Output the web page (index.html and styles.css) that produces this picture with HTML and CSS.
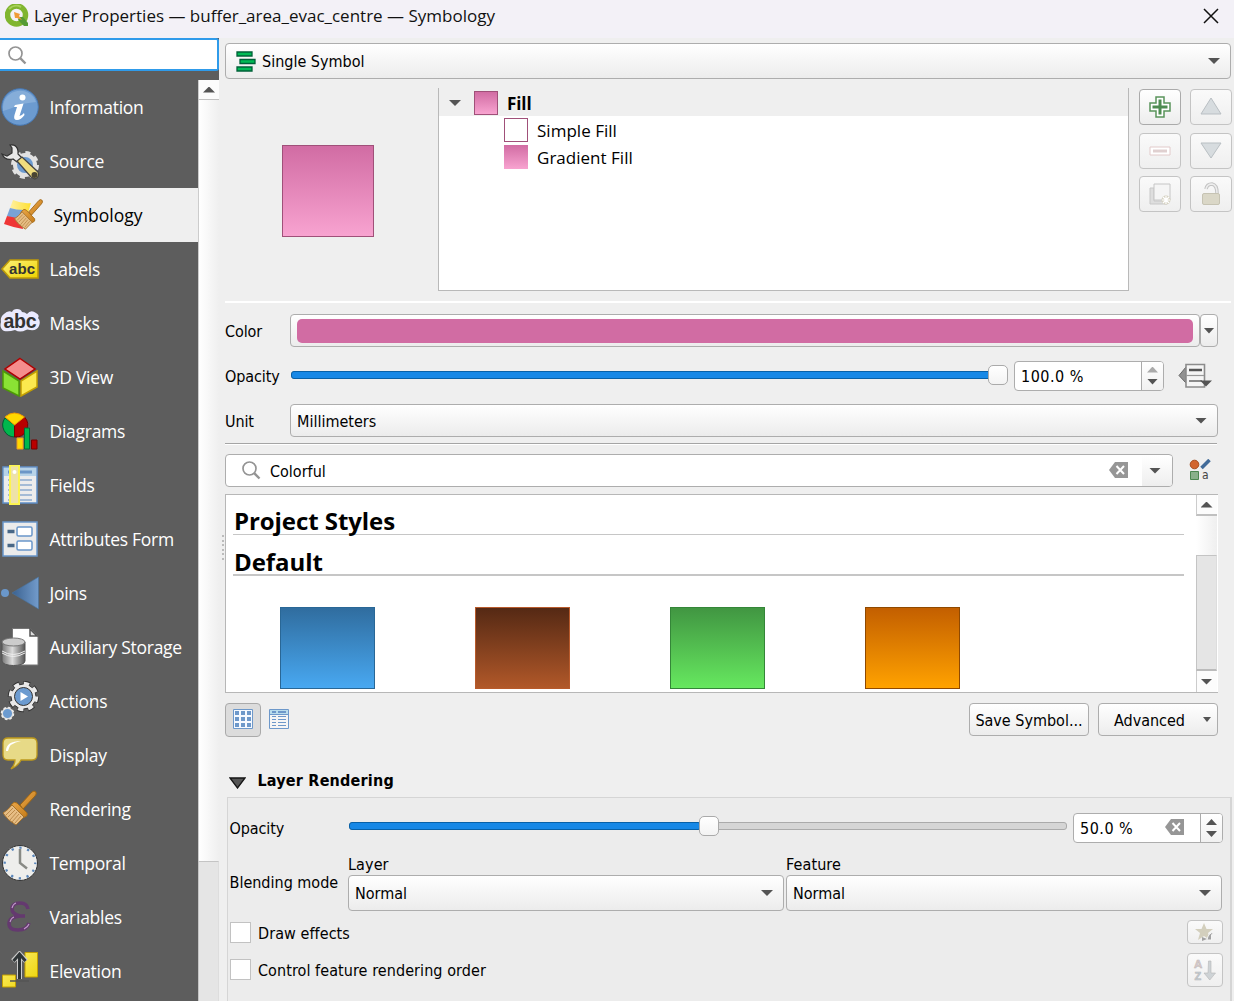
FILE: index.html
```html
<!DOCTYPE html>
<html lang="en">
<head>
<meta charset="utf-8">
<title>Layer Properties</title>
<link rel="stylesheet" href="styles.css">
</head>
<body>
<svg class="defs" width="0" height="0" aria-hidden="true">
  <defs>
    <linearGradient id="yel" x1="0" y1="0" x2="1" y2="1"><stop offset="0" stop-color="#fff27a"/><stop offset="1" stop-color="#ecd200"/></linearGradient>
    <linearGradient id="blu"><stop offset="0" stop-color="#3a6190"/><stop offset="1" stop-color="#729bcb"/></linearGradient>
    <linearGradient id="met"><stop offset="0" stop-color="#777"/><stop offset=".45" stop-color="#ddd"/><stop offset="1" stop-color="#555"/></linearGradient>
    <linearGradient id="wood" x1="0" y1="0" x2="1" y2="1"><stop offset="0" stop-color="#eca94c"/><stop offset="1" stop-color="#c37a17"/></linearGradient>
    <linearGradient id="flagy" x1="0" x2="1"><stop offset="0" stop-color="#fff0a0"/><stop offset="1" stop-color="#ffe030"/></linearGradient>
    <g id="brush">
      <path d="M20 17 L32 4 Q34 2 36 4 Q37 6 35 8 L23 21z" fill="url(#wood)" stroke="#9c6414"/>
      <path d="M12 16 Q14 13 17 15 L27 25 Q28 28 25 29 L22 30 L10 19z" fill="url(#wood)" stroke="#a66c18"/>
      <path d="M12 17 L24 29 L16 37 Q7 32 3 25 Q8 22 12 17z" fill="#e6bd84" stroke="#a3712d"/>
      <path d="M13 20L6 27M15 22L8 29M17 24L10 32M19 26L12 34M21 28L15 35" stroke="#b78545" stroke-width=".9"/>
    </g>
    <g id="lens"><circle cx="7.500" cy="7.500" r="6.500" fill="none" stroke="#949494" stroke-width="1.700"/><path d="M12.200 12.200L17.500 17.500" stroke="#949494" stroke-width="2.400"/></g>
    <g id="clear"><path d="M0 8L6 0H19V16H6z" fill="#969696"/><path d="M7.500 4L15 12M15 4L7.500 12" stroke="#fff" stroke-width="2"/></g>
  </defs>
</svg>
<header class="titlebar">
  <svg class="logo" width="25" height="25" viewBox="0 0 25 25"><circle cx="11.500" cy="11" r="9" fill="none" stroke="#80b52f" stroke-width="5.500"/><path d="M4 5A10 10 0 0 1 16 3" fill="none" stroke="#a7d15a" stroke-width="2"/><path d="M14 13H18L23 19V22H19L13 16z" fill="#559b36"/><path d="M9 8L15 10L14 12L17 16L12 14L10 14z" fill="#f09a38"/></svg>
  <h1>Layer Properties — buffer_area_evac_centre — Symbology</h1>
  <svg class="close" width="16" height="16" viewBox="0 0 16 16"><path d="M1 1L15 15M15 1L1 15" stroke="#111" stroke-width="1.500"/></svg>
</header>
<div class="window">
  <aside class="sidebar">
    <div class="side-search"><svg width="19" height="19"><use href="#lens"/></svg></div>
    <div class="side-body">
      <nav class="nav">
        <a class="item"><svg viewBox="0 0 40 40"><circle cx="20" cy="20" r="18.300" fill="#6c9bd0" stroke="#4677b2"/><path d="M3 20A17 17 0 0 1 36 15Q24 16 17 19T3 24z" fill="#9bbce0" opacity=".55"/><circle cx="22.500" cy="10.500" r="3" fill="#fff"/><path d="M15 18L23.500 16.500L19.500 29Q22 28.500 24 26L24.500 28Q21 33 17 33Q13 33 14.500 28L17 20L14 20z" fill="#fff"/></svg><span>Information</span></a>
        <a class="item"><svg viewBox="0 0 40 40"><circle cx="25" cy="24" r="10" fill="#6c9bd0" stroke="#e2e2e2" stroke-width="4"/><circle cx="25" cy="24" r="12.500" fill="none" stroke="#e2e2e2" stroke-width="3" stroke-dasharray="5 4.817"/><path d="M10 4Q17 3 18 10L18 13L22 17L17 21L13 18Q5 20 2 13L7 15L12 12L12 7z" fill="#e8e8e8" stroke="#333" stroke-width="1.200"/><path d="M17 20L22 16L38 31Q40 36 35 38L31 36z" fill="#f0dd7e" stroke="#444" stroke-width="1.300"/><circle cx="34.500" cy="34" r="3" fill="#4a4532"/></svg><span>Source</span></a>
        <a class="item active"><svg viewBox="0 0 40 40"><path d="M9 5Q18 9 27 8L24 18L6 13z" fill="url(#flagy)"/><path d="M6 13Q12 15 20 15L16 26L3 21z" fill="#78a2d6"/><path d="M3 21L18 24L19 34Q8 32 0 29z" fill="#ef3535"/><use href="#brush" transform="translate(8 2) scale(.84 .87)"/></svg><span>Symbology</span></a>
        <a class="item"><svg viewBox="0 0 40 40"><path d="M2 20L10 11H38V29H10z" fill="url(#yel)" stroke="#be9b08" stroke-width="1.600"/><text x="9" y="24.500" class="abc" font-size="15" textLength="26">abc</text></svg><span>Labels</span></a>
        <a class="item"><svg viewBox="0 0 40 40"><path d="M4 11Q8 7 12 9Q13 6 17 6Q21 6 22 9Q25 9 27 11Q31 6 36 10Q40 12 38 15Q41 18 39 23Q37 28 30 27Q27 26 26 27Q20 30 15 27Q9 29 4 28Q-1 25 1 19Q0 14 4 11z" fill="#eaeaff"/><text x="3.500" y="24.500" class="abc" font-size="19.500" textLength="33">abc</text></svg><span>Masks</span></a>
        <a class="item"><svg viewBox="0 0 40 40"><path d="M20 1.500L35 12L20 22L5 12z" fill="#f58d8d" stroke="#b00000" stroke-width="1.500"/><path d="M3 14L19 24V39L3 31z" fill="#8ae234" stroke="#4e9a06" stroke-width="1.500"/><path d="M37 14L21 24V39L37 30z" fill="#fce94f" stroke="#c4a000" stroke-width="1.500"/></svg><span>3D View</span></a>
        <a class="item"><svg viewBox="0 0 40 40"><path d="M14.500 14V26A12 12 0 0 1 5 7z" fill="#00b74d" stroke="#005c31"/><path d="M14.500 14L24.500 6A12 12 0 0 1 14.500 26z" fill="#b90000" stroke="#760000"/><path d="M14.500 14L5 6Q14 -2 24.500 6z" fill="#ffd900" stroke="#ef9a00"/><path d="M17 27H23V38H17z" fill="#ffd900" stroke="#f09b22"/><path d="M24.500 17H29.500V38H24.500z" fill="#00b74d" stroke="#006837"/><path d="M31.500 29H37V38H31.500z" fill="#b90000" stroke="#760000"/></svg><span>Diagrams</span></a>
        <a class="item"><svg viewBox="0 0 40 40"><path d="M3 2H37V38H3z" fill="#ececec" stroke="#5f8fc8" stroke-width="1.500"/><path d="M4 3H36V11H4z" fill="#b7d3e8"/><path d="M8 7H32" stroke="#6b96c7" stroke-width="3"/><path d="M8 15H32M8 20H32M8 25H32M8 30H32M8 35H32" stroke="#5d8ac0" stroke-width="1.200"/><path d="M10 .5H19V39H10z" fill="#eee2a8" stroke="#fcf450" stroke-width="2"/><circle cx="14.500" cy="7" r="2" fill="#fff"/></svg><span>Fields</span></a>
        <a class="item"><svg viewBox="0 0 40 40"><path d="M3 3H37V37H3z" fill="#ebebeb" stroke="#6a97ca" stroke-width="1.500"/><path d="M7.500 12.500H14.500M7.500 26.500H14.500" stroke="#486786" stroke-width="3.500"/><rect x="17" y="8" width="15" height="9" rx="1.500" fill="#fff" stroke="#6a97ca" stroke-width="1.500"/><rect x="17" y="22" width="15" height="9" rx="1.500" fill="#fff" stroke="#6a97ca" stroke-width="1.500"/></svg><span>Attributes Form</span></a>
        <a class="item"><svg viewBox="0 0 40 40"><circle cx="5" cy="20" r="4" fill="#6a97ca"/><path d="M12 20L38.500 4V36z" fill="url(#blu)" stroke="#48739f" stroke-width=".6"/></svg><span>Joins</span></a>
        <a class="item"><svg viewBox="0 0 40 40"><path d="M12.500 1.500H30L38 9V38H12.500z" fill="#fff" stroke="#777"/><path d="M30 2V9H37z" fill="#ddd" stroke="#555" stroke-width="1.500"/><path d="M2 15V34C2 40 25 40 25 34V15z" fill="url(#met)" stroke="#555"/><ellipse cx="13.500" cy="15" rx="11.500" ry="4" fill="#ccc" stroke="#777"/><path d="M2 24Q13 31 25 24M2 26Q13 33 25 26" fill="none" stroke="#eee"/></svg><span>Auxiliary Storage</span></a>
        <a class="item"><svg viewBox="0 0 40 40"><circle cx="23.500" cy="15.500" r="13.500" fill="none" stroke="#333" stroke-width="4.500" stroke-dasharray="6.500 4.103" stroke-dashoffset=".5"/><circle cx="23.500" cy="15.500" r="12.500" fill="#e9e9e9" stroke="#333" stroke-width="1"/><circle cx="23.500" cy="15.500" r="13" fill="none" stroke="#e9e9e9" stroke-width="3.500" stroke-dasharray="5.300 4.910"/><circle cx="23.500" cy="15.500" r="9" fill="#6c9bd0" stroke="#333"/><path d="M20.500 11L28 15.500L20.500 20z" fill="#fff"/><circle cx="7.500" cy="32.500" r="5.300" fill="#6c9bd0" stroke="#ddd" stroke-width="1.500"/><circle cx="7.500" cy="32.500" r="6" fill="none" stroke="#eee" stroke-width="1.500" stroke-dasharray="2.500 2.200"/></svg><span>Actions</span></a>
        <a class="item"><svg viewBox="0 0 40 40"><path d="M8 3H32Q37 3 37 8V20Q37 25 32 25H21Q18 31 11 34Q15 30 15 25H8Q3 25 3 20V8Q3 3 8 3z" fill="#e7da87" stroke="#bd991c" stroke-width="1.300"/><path d="M6 16Q6 6 21 6Q9 8 8 16z" fill="#fff"/></svg><span>Display</span></a>
        <a class="item"><svg viewBox="0 0 40 40"><use href="#brush" y="-1"/></svg><span>Rendering</span></a>
        <a class="item"><svg viewBox="0 0 40 40"><circle cx="20" cy="20" r="17.500" fill="#eeeeec" stroke="#343434" stroke-width="1"/><circle cx="20" cy="20" r="15.300" fill="none" stroke="#5a86ba" stroke-width="2.300" stroke-dasharray="2.300 5.711" stroke-dashoffset="1.150"/><path d="M20 6V20L27 25.500" fill="none" stroke="#888a85" stroke-width="2.500"/></svg><span>Temporal</span></a>
        <a class="item"><svg viewBox="0 0 40 40"><path d="M28 12Q27 6 20 6Q12 6 12 12Q12 17 20 19H25M20 19Q9 20 9 27Q9 33 18 33Q27 33 29 26" fill="none" stroke="#64396f" stroke-width="3.600"/><path d="M12 11Q13 7 16 6M10 25Q11 21 14 20M24 32Q28 30 29 27" fill="none" stroke="#c19bca" stroke-width="1.100"/></svg><span>Variables</span></a>
        <a class="item"><svg viewBox="0 0 40 40"><path d="M25 1.500H37.500V26H25zM2.500 24H15.500V36H2.500z" fill="url(#yel)" stroke="#c4a000"/><path d="M19.500 28V4M13 10L19.500 3L26 10" fill="none" stroke="#ccc" stroke-width="5"/><path d="M19.500 28V3M13.500 10L19.500 3L25.500 10" fill="none" stroke="#2e3436" stroke-width="3"/><path d="M10 30H29" stroke="#555" stroke-width="1.500"/></svg><span>Elevation</span></a>
      </nav>
      <div class="scroll side-scroll"><div class="sbtn"><i class="tri up"></i></div><div class="handle"></div><div class="groove"></div></div>
    </div>
  </aside>
  <div class="splitter"><i></i><i></i><i></i><i></i><i></i><i></i></div>
  <main class="content">
    <div class="combo renderer"><svg width="20" height="21" viewBox="0 0 20 21"><g fill="#00bb55" stroke="#006038" stroke-width="1.300"><path d="M1 1H16V5H1zM4 8.500H19V12.500H4zM1 16H16V20H1z"/></g></svg><span>Single Symbol</span><i class="tri"></i></div>
    <section class="symbol">
      <div class="preview"><div class="swatch"></div></div>
      <div class="tree">
        <div class="row root"><i class="tri"></i><b class="chip grad line"></b><span>Fill</span></div>
        <div class="row"><b class="chip line"></b><span>Simple Fill</span></div>
        <div class="row"><b class="chip grad"></b><span>Gradient Fill</span></div>
      </div>
      <div class="tools">
        <button><svg viewBox="0 0 24 24"><path d="M8 2H16V8H22V16H16V22H8V16H2V8H8z" fill="#fff" stroke="#59945b" stroke-width="1.500"/><path d="M12 4.500V19.500M4.500 12H19.500" stroke="#4e8c51" stroke-width="3"/></svg></button>
        <button class="off"><svg viewBox="0 0 24 24"><path d="M12 3L22 19H2z" fill="#d7dcdf" stroke="#b9bfc3"/></svg></button>
        <button class="off"><svg viewBox="0 0 24 24"><path d="M2 8H22V16H2z" fill="#fff" stroke="#e2caca"/><path d="M5 12H19" stroke="#e0d0d0" stroke-width="3"/></svg></button>
        <button class="off"><svg viewBox="0 0 24 24"><path d="M12 19L22 4H2z" fill="#d7dcdf" stroke="#b9bfc3"/></svg></button>
        <button class="off"><svg viewBox="0 0 24 24"><path d="M2 6H6V19H19V22H2z" fill="#dedede" stroke="#c8c8c8"/><path d="M6 2H22V18H6z" fill="#f5f5f5" stroke="#c6c6c6"/><circle cx="18" cy="18" r="4.500" fill="#d6d2c2"/><path d="M18 14V22M14 18H22M15 15L21 21M21 15L15 21" stroke="#fff" stroke-width="1.200"/></svg></button>
        <button class="off"><svg viewBox="0 0 24 24"><path d="M7 7Q8 2 13 2Q18 3 18 11" fill="none" stroke="#c4c4c4" stroke-width="3.600"/><path d="M7 7Q8 2 13 2Q18 3 18 11" fill="none" stroke="#eee" stroke-width="1.500"/><rect x="3.500" y="11.500" width="17" height="11" rx="1.500" fill="#dad7c7" stroke="#c6c3b3"/></svg></button>
      </div>
    </section>
    <hr class="white">
    <div class="form color-row"><label>Color</label><div class="color-button"><div></div></div><div class="drop"><i class="tri"></i></div></div>
    <div class="form opacity-row"><label>Opacity</label><div class="slider"><div class="fill"></div><div class="knob"></div></div><div class="spin"><span>100.0 %</span><div class="steps"><i class="tri up dim"></i><i class="tri"></i></div></div>
      <svg class="override" width="35" height="26" viewBox="0 0 35 26"><path d="M8 4L1 12.500L8 20z" fill="#909090" stroke="#666"/><path d="M8 1.500H26.500V24H8z" fill="#f5f5f5" stroke="#8c8c8c" stroke-width="1.600"/><path d="M8 12.500H26" stroke="#999" stroke-width="1.200"/><path d="M11 7H24" stroke="#555" stroke-width="2.500"/><path d="M11 18H24" stroke="#666" stroke-width="1.500"/><path d="M22 17.500H34L28 23.500z" fill="#555"/></svg></div>
    <div class="form unit-row"><label>Unit</label><div class="combo"><span>Millimeters</span><i class="tri"></i></div></div>
    <hr class="grey">
    <div class="filter-row">
      <div class="filter"><svg width="19" height="19"><use href="#lens"/></svg><span>Colorful</span><svg class="x" width="19" height="16"><use href="#clear"/></svg><div class="drop-in"><i class="tri"></i></div></div>
      <svg class="style-manager" width="22" height="22" viewBox="0 0 22 22"><circle cx="5.500" cy="5.500" r="4.300" fill="#d2652f" stroke="#a74d20"/><path d="M12.500 9L20.500 1" stroke="#416b99" stroke-width="3.500"/><path d="M1.500 12.500H9.500V20.500H1.500z" fill="#89b08a" stroke="#4c8750"/><text x="13" y="20" font-size="12" fill="#444">a</text></svg>
    </div>
    <div class="gallery">
      <div class="gallery-view">
        <h2>Project Styles</h2>
        <h2 class="second">Default</h2>
        <div class="styles"><div class="s blue"></div><div class="s brown"></div><div class="s green"></div><div class="s orange"></div></div>
      </div>
      <div class="scroll"><div class="sbtn"><i class="tri up"></i></div><div class="handle"></div><div class="groove"></div><div class="sbtn low"><i class="tri"></i></div></div>
    </div>
    <div class="actions">
      <div class="view-toggle"><svg width="20" height="20" viewBox="0 0 20 20"><path d="M.5 .5H19.500V19.500H.5z" fill="#f5f9ff" stroke="#6d98ca"/><path d="M4 2V18M10 2V18M16 2V18" stroke="#6d98ca" stroke-width="4" stroke-dasharray="4 2"/></svg></div>
      <svg class="list-view" width="20" height="20" viewBox="0 0 20 20"><path d="M.5 .5H19.500V19.500H.5z" fill="#f5f5f5" stroke="#6d98ca"/><path d="M1 1H19V5H1z" fill="#b9dcec"/><path d="M1 5.500H19" stroke="#6d98ca"/><path d="M3 3H7M9 3H17" stroke="#6d98ca" stroke-width="2"/><path d="M3 7.500H7M9 7.500H17M3 10.500H7M9 10.500H17M3 13.500H7M9 13.500H17M3 16.500H7M9 16.500H17" stroke="#6d98ca"/></svg>
      <div class="push save"><span>Save Symbol...</span></div>
      <div class="push advanced"><span>Advanced</span><i class="tri small"></i></div>
    </div>
    <div class="group-title"><svg width="17" height="12" viewBox="0 0 17 12"><path d="M1 1H16L8.500 11z" fill="#555" stroke="#151515" stroke-width="1.300"/></svg><span>Layer Rendering</span></div>
    <section class="group">
      <div class="g-opacity"><label>Opacity</label><div class="slider half"><div class="fill"></div><div class="knob"></div></div><div class="spin"><span>50.0 %</span><svg class="x" width="19" height="16"><use href="#clear"/></svg><div class="steps"><i class="tri up"></i><i class="tri"></i></div></div></div>
      <div class="blend"><label>Blending mode</label><div class="field"><span class="cap">Layer</span><div class="combo"><span>Normal</span><i class="tri"></i></div></div><div class="field"><span class="cap">Feature</span><div class="combo"><span>Normal</span><i class="tri"></i></div></div></div>
      <div class="check first"><i class="box"></i><span>Draw effects</span><button class="off"><svg width="20" height="20" viewBox="0 0 20 20"><path d="M9 1L11.500 7H18L13 11L15 18L9 14L3 18L5 11L0 7H6.500z" fill="#d3cfbd"/><path d="M12 18Q13 11 19 10L16.500 13V18z" fill="#a2a2a2" stroke="#f5f5f5"/><path d="M7 15L12 17L7 19z" fill="#a2a2a2"/></svg></button></div>
      <div class="check second"><i class="box"></i><span>Control feature rendering order</span><button class="off tall"><svg width="24" height="24" viewBox="0 0 24 24"><path d="M15.500 3H18V15H22.500L16.800 22L11 15H15z" fill="#ced3d6" stroke="#b5b5b5" stroke-width=".6"/><text x="1" y="10" class="az" font-size="11.500" fill="#dcc9c9">A</text><text x="1.500" y="21.500" class="az" font-size="11" fill="#c2ccd4">Z</text></svg></button></div>
    </section>
  </main>
</div>
</body>
</html>
```
FILE: styles.css
```css
* { box-sizing: border-box; }
body { margin: 0; width: 1234px; height: 1001px; overflow: hidden; background: #efefef; color: #000; font: 16px "DejaVu Sans Condensed", "DejaVu Sans", sans-serif; font-stretch: condensed; letter-spacing: 0; }
svg { display: block; flex: none; }
.defs { position: absolute; }
h1, h2, hr, button { margin: 0; }

.titlebar { height: 38px; display: flex; align-items: flex-start; background: #f3f1f7; padding: 4px 15px 0 5px; }
h1 { font: 17px/23px "Open Sans", sans-serif; letter-spacing: 0; margin-left: 4px; flex: 1; color: #111; }
.close { margin-top: 4px; }

.window { display: flex; height: 963px; }
.sidebar { width: 219px; background: #5d5d5d; display: flex; flex-direction: column; }
.side-search { height: 33px; margin-bottom: 9px; background: #fff; border: 2px solid #2f9bea; border-left: 0; border-radius: 0 3px 3px 0; padding: 6px 8px; }
.side-body { display: flex; flex: 1; min-height: 0; }
.nav { width: 198px; font: 17.5px "Open Sans", sans-serif; letter-spacing: -.27px; color: #fff; }
.item { height: 54px; display: flex; align-items: center; gap: 9.5px; }
.item svg { width: 40px; height: 40px; }
.item.active { background: #efefef; color: #000; padding-left: 4px; letter-spacing: 0; }
.abc { font-family: "Liberation Sans", sans-serif; font-weight: bold; fill: #333; letter-spacing: 0; }

.scroll { width: 21px; display: flex; flex-direction: column; }
.sbtn { height: 20px; background: #fcfcfc; border-left: 1px solid #ccc; border-bottom: 1px solid #c0c0c0; display: flex; align-items: center; justify-content: center; }
.scroll .handle { height: 761px; background: linear-gradient(90deg, #fff, #efefef); border-left: 1px solid #ccc; }
.scroll .groove { flex: 1; background: #e5e5e5; border: solid #c4c4c4; border-width: 1px 1px 0; border-right-color: #ddd; }
.tri { display: block; flex: none; width: 12px; height: 6px; background: #545454; clip-path: polygon(0 0, 100% 0, 50% 100%); }
.tri.up { clip-path: polygon(50% 0, 100% 100%, 0 100%); }
.tri.dim { background: #aaa; }
.tri.small { width: 8px; height: 5px; }

.splitter { width: 6px; padding: 497px 0 0 3px; display: flex; flex-direction: column; gap: 2.5px; }
.splitter i { width: 2px; height: 2px; background: #bbb; }

.content { width: 1009px; padding-top: 5px; }
.combo { display: flex; align-items: center; border: 1.5px solid #adadad; border-radius: 4px; background: linear-gradient(#fff, #ececec); padding: 0 10px 0 6px; }
.combo .tri { margin-left: auto; }
.unit-row span, .field .combo span { padding-top: 1px; }
.renderer { width: 1006px; height: 36px; padding-left: 10px; }
.renderer span { margin-left: 6px; }

.symbol { display: flex; margin-top: 9px; height: 204px; }
.preview { width: 213px; padding: 57px 0 0 57px; }
.swatch { width: 92px; height: 92px; border: 1.5px solid #a05079; background: linear-gradient(#d16ca3, #f8a3d0); }
.tree { width: 691px; height: 203px; background: #fff; border: 1px solid #b9b9b9; border-top: 0; font: 17px "Open Sans", sans-serif; letter-spacing: .02px; }
.row { height: 27px; padding-left: 65px; display: flex; align-items: center; }
.row span { padding-top: 1px; }
.row.root { height: 28px; background: #efefef; padding: 2px 0 0 10px; font-weight: bold; letter-spacing: -.1px; }
.root span { padding-top: 0; }
.chip { width: 24px; height: 24px; margin-right: 9px; }
.root .chip { margin-left: 13px; }
.chip.grad { background: linear-gradient(#d16ca3, #f8a3d0); }
.chip.line { border: 1px solid #a05079; }
.tools { display: grid; grid-template-columns: 42px 42px; grid-auto-rows: 36px; gap: 7.5px 9px; margin: 1px 0 0 10px; align-content: start; }
button { display: flex; align-items: center; justify-content: center; padding: 0; border: 1.5px solid #aaa; border-radius: 4px; background: linear-gradient(#fff, #ededed); }
button.off { border-color: #c4c4c4; background: linear-gradient(#fafafa, #efefef); }
.tools svg { width: 24px; height: 24px; }

hr { border: 0; }
.white { width: 1006px; height: 2px; margin-top: 9px; background: #fff; }
.form { display: flex; align-items: center; height: 33px; }
.form label { width: 65px; padding-top: 1px; letter-spacing: -.1px; }
.color-row { margin-top: 11px; }
.color-button { width: 910px; height: 33px; padding: 4px 6px; border: 1.5px solid #adadad; border-radius: 4px; background: linear-gradient(#fff, #ececec); }
.color-button div { height: 24px; border-radius: 5px; background: #d16ca3; }
.drop { width: 18px; height: 33px; border: 1.5px solid #adadad; border-radius: 4px; background: linear-gradient(#fff, #ececec); display: flex; align-items: center; justify-content: center; }
.drop .tri { width: 11px; }
.opacity-row { margin-top: 12px; }
.slider { position: relative; top: -1px; width: 717px; height: 8px; margin-left: 1px; border: 1px solid #aaa; border-radius: 3px; background: #d5d5d5; }
.slider .fill { height: 8px; width: 700px; margin: -1px; background: #1788e6; border: 1.5px solid #0861a8; border-radius: 3px; }
.half .fill { width: 352px; }
.knob { position: absolute; top: -7px; right: -1px; width: 20px; height: 20px; border: 1.5px solid #aaa; border-radius: 5px; background: linear-gradient(#fff, #f3f3f3); }
.half .knob { right: 347px; }
.spin { display: flex; align-items: stretch; width: 150px; height: 30px; margin-left: 6px; border: 1.5px solid #adadad; border-radius: 4px; background: #fff; line-height: 30px; overflow: hidden; }
.spin span { margin-left: 6px; flex: 1; letter-spacing: .5px; }
.steps { width: 22px; border-left: 1px solid #aaa; display: flex; flex-direction: column; align-items: center; justify-content: center; gap: 6px; background: linear-gradient(#fff, #f1f1f1); }
.override { margin-left: 14px; }
.unit-row { margin-top: 12px; }
.unit-row .combo { width: 928px; height: 33px; }
.grey { width: 992px; height: 2px; margin-top: 6px; background: #a5a5a5; border-bottom: 1px solid #fff; }

.filter-row { display: flex; margin-top: 9px; }
.filter { display: flex; align-items: center; width: 948px; height: 33px; border: 1.5px solid #adadad; border-radius: 4px; background: #fff; padding-left: 16px; overflow: hidden; }
.filter span { margin: 2px 0 0 9px; }
.filter .x { margin: -2px 14px 0 auto; }
.drop-in { width: 30px; height: 30px; background: linear-gradient(#fff, #eee); display: flex; align-items: center; justify-content: center; padding-right: 4px; }
.style-manager { margin: 5px 0 0 16px; }
.gallery { display: flex; width: 993px; height: 199px; margin-top: 7px; border: 1px solid #b7b7b7; border-right: 0; background: #fff; }
.gallery-view { width: 970px; padding: 9px 12px 0 7px; }
h2 { height: 31px; border-bottom: 1px solid #c6c6c6; font: bold 24px/34px "Open Sans", sans-serif; letter-spacing: -.07px; padding-left: 1px; }
h2.second { height: 41px; border-bottom-width: 2px; padding-top: 10px; line-height: 34px; }
.styles { display: flex; gap: 100px; padding: 31px 0 0 47px; }
.s { width: 95px; height: 82px; border: 1.5px solid; }
.blue { background: linear-gradient(#306d9f, #48a8f1); border-color: #296796; }
.brown { background: linear-gradient(#552914, #b15829); border-color: #b85a2b; }
.green { background: linear-gradient(#419642, #66e85f); border-color: #348638; }
.orange { background: linear-gradient(#c35f00, #ffa200); border-color: #8f4900; }
.gallery .sbtn { height: 21px; border-bottom-width: 2px; padding-right: 1px; }
.gallery .handle { height: 39px; border-left: 0; }
.gallery .groove { border-bottom: 2px solid #bbb; }
.gallery .low { border-bottom: 0; }

.actions { display: flex; align-items: flex-start; margin-top: 10px; height: 34px; }
.view-toggle { width: 36px; height: 34px; padding: 5px 6.5px; border: 1.5px solid #aaa; border-radius: 4px; background: #dcdcdc; }
.list-view { margin: 6px 0 0 8px; }
.push { height: 33px; width: 120px; border: 1.5px solid #adadad; border-radius: 4px; background: linear-gradient(#fff, #ececec); display: flex; align-items: center; justify-content: center; white-space: nowrap; }
.push span { padding-top: 1px; }
.save { margin-left: 680px; }
.advanced { margin-left: 9px; justify-content: flex-end; padding-right: 6px; gap: 18px; }

.group-title { display: flex; align-items: center; height: 26px; margin: 30px 0 4px 4px; font-weight: bold; letter-spacing: .2px; }
.group-title svg { margin-top: 5px; }
.group-title span { margin-left: 11.5px; }
.group { width: 1005px; height: 210px; margin-left: 2px; border: solid #d5d5d5; border-width: 1px 2px 0 1px; background: #ececec; padding: 15px 0 0 2px; }
.g-opacity { display: flex; align-items: center; height: 30px; }
.g-opacity label { width: 118px; letter-spacing: -.1px; text-indent: -.5px; }
.g-opacity .slider { width: 718px; top: -2px; }
.spin .x { margin: 5px 16px 0 0; }
.g-opacity .tri, .opacity-row .steps .tri { width: 11px; }
.blend { display: flex; gap: 2px; margin-top: 11px; }
.blend label { width: 116px; padding-top: 18.5px; text-indent: -.5px; }
.field .cap { display: block; height: 21px; line-height: 21px; letter-spacing: .1px; }
.field .combo { width: 436px; height: 36px; }
.check { display: flex; align-items: center; height: 24px; margin-top: 9px; padding-right: 7px; letter-spacing: .07px; }
.check.second { height: 34px; }
.first span { padding-top: 2px; }
.box { width: 21px; height: 21px; margin: 0 7.5px 0 -.5px; background: #fff; border: 1.5px solid #c2c2c2; }
.second .box { margin-top: -2px; }
.check button { width: 36px; height: 24px; margin-left: auto; }
.check .tall { height: 34px; }
.az { font-family: "Liberation Sans", sans-serif; font-weight: bold; letter-spacing: 0; stroke: #b8b8b8; stroke-width: .5px; }
```
